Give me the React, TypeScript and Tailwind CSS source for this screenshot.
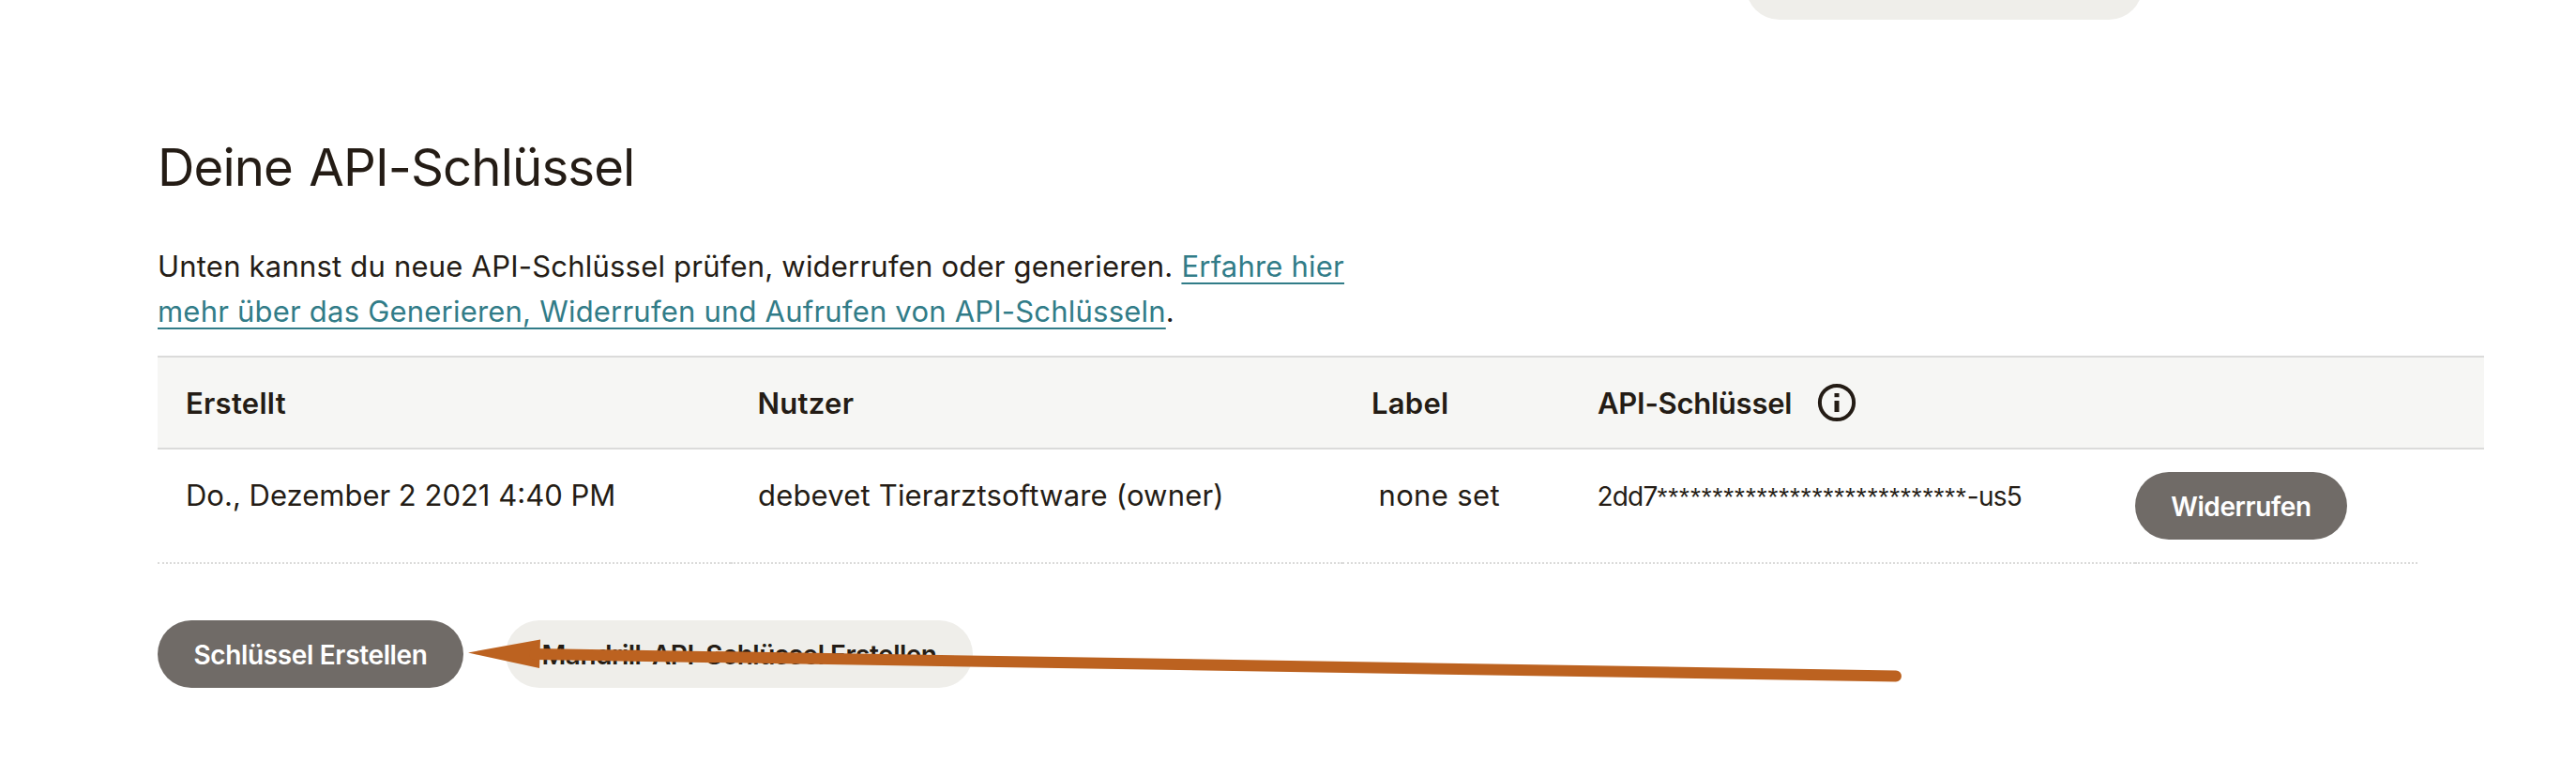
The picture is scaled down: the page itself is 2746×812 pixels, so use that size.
import type { ReactNode } from 'react';

function InfoIcon() {
  return (
    <svg className="-mt-[2px] ml-[27px] shrink-0" width="42" height="42" viewBox="0 0 42 42" fill="none">
      <circle cx="21" cy="21" r="18.1" stroke="#241c15" strokeWidth="4" />
      <rect x="18.5" y="11" width="5" height="4.2" fill="#241c15" />
      <rect x="18.5" y="19" width="5" height="12" fill="#241c15" />
    </svg>
  );
}

function Pill({ className, children }: { className: string; children: ReactNode }) {
  return (
    <button
      className={`flex h-[72px] shrink-0 items-center justify-center rounded-full pt-px text-[28px] font-semibold whitespace-nowrap ${className}`}
    >
      {children}
    </button>
  );
}

function Arrow() {
  return (
    <svg
      className="pointer-events-none absolute top-[670px] left-[490px]"
      width="1550"
      height="70"
      viewBox="490 670 1550 70"
      fill="#bc6220"
    >
      <path d="M499 695.5L576 681.5L575 712Z" />
      <path d="M570 697L2021 720.5" stroke="#bc6220" strokeWidth="12" strokeLinecap="round" />
    </svg>
  );
}

const grid = 'grid grid-cols-[611px_652px_243px_602px_301px]';
const dotted = 'h-[122px] border-b-2 border-dotted border-[#dbdbda]';

export default function App() {
  return (
    <div className="relative h-[812px] w-[2746px] overflow-hidden bg-white px-[168px] font-['Inter','Liberation_Sans',sans-serif] text-[31px] leading-[48px] text-[#241c15]">
      <div className="ml-[1693px] flex h-[21px] w-[423px] items-end">
        <div className="h-[72px] w-full shrink-0 rounded-full bg-[#efeeea]" />
      </div>

      <h1 className="mt-[123px] text-[54.6px] leading-[68px] tracking-[-0.92px] [word-spacing:3px]">
        Deine API-Schlüssel
      </h1>

      <p className="mt-[48px] h-[119px] whitespace-nowrap tracking-[0.21px]">
        Unten kannst du neue API-Schlüssel prüfen, widerrufen oder generieren.{' '}
        <a className="text-[#317c88] underline decoration-2 underline-offset-[6px] [text-decoration-skip-ink:none]">
          Erfahre hier
          <br />
          mehr über das Generieren, Widerrufen und Aufrufen von API-Schlüsseln
        </a>
        .
      </p>

      <div className="w-[2480px]">
        <div
          className={`${grid} h-[100px] items-center border-y-2 border-[#dbdbda] bg-[#f6f6f4] font-semibold tracking-[0.27px]`}
        >
          <div className="pt-[2px] pl-[30px]">Erstellt</div>
          <div className="pt-[2px] pl-[28.5px]">Nutzer</div>
          <div className="pt-[2px] pl-[31px]">Label</div>
          <div className="flex items-center pt-[2px] pl-[29px] tracking-[-0.25px]">
            API-Schlüssel
            <InfoIcon />
          </div>
        </div>
        <div className={`${grid} whitespace-nowrap`}>
          <div className={`${dotted} pt-[25px] pl-[30px]`}>Do., Dezember 2 2021 4:40 PM</div>
          <div className={`${dotted} pt-[25px] pl-[29px] tracking-[0.18px]`}>debevet Tierarztsoftware (owner)</div>
          <div className={`${dotted} pt-[25px] pl-[38.5px] tracking-[0.36px]`}>none set</div>
          <div className={`${dotted} pt-[26px] pl-[28.5px] text-[28px] tracking-[-0.8px]`}>
            2dd7
            <span className="font-['Liberation_Sans'] tracking-[0.9px]">****************************</span>
            -us5
          </div>
          <div className={`${dotted} pt-[24px]`}>
            <Pill className="w-[226px] bg-[#706b67] tracking-[-0.4px] text-white">Widerrufen</Pill>
          </div>
        </div>
      </div>

      <div className="mt-[60px] flex gap-[45px]">
        <Pill className="w-[326px] bg-[#706b67] tracking-[-0.35px] text-white">Schlüssel Erstellen</Pill>
        <Pill className="w-[498px] bg-[#efeeea] tracking-[-0.5px]">Mandrill-API-Schlüssel Erstellen</Pill>
      </div>

      <Arrow />
    </div>
  );
}
